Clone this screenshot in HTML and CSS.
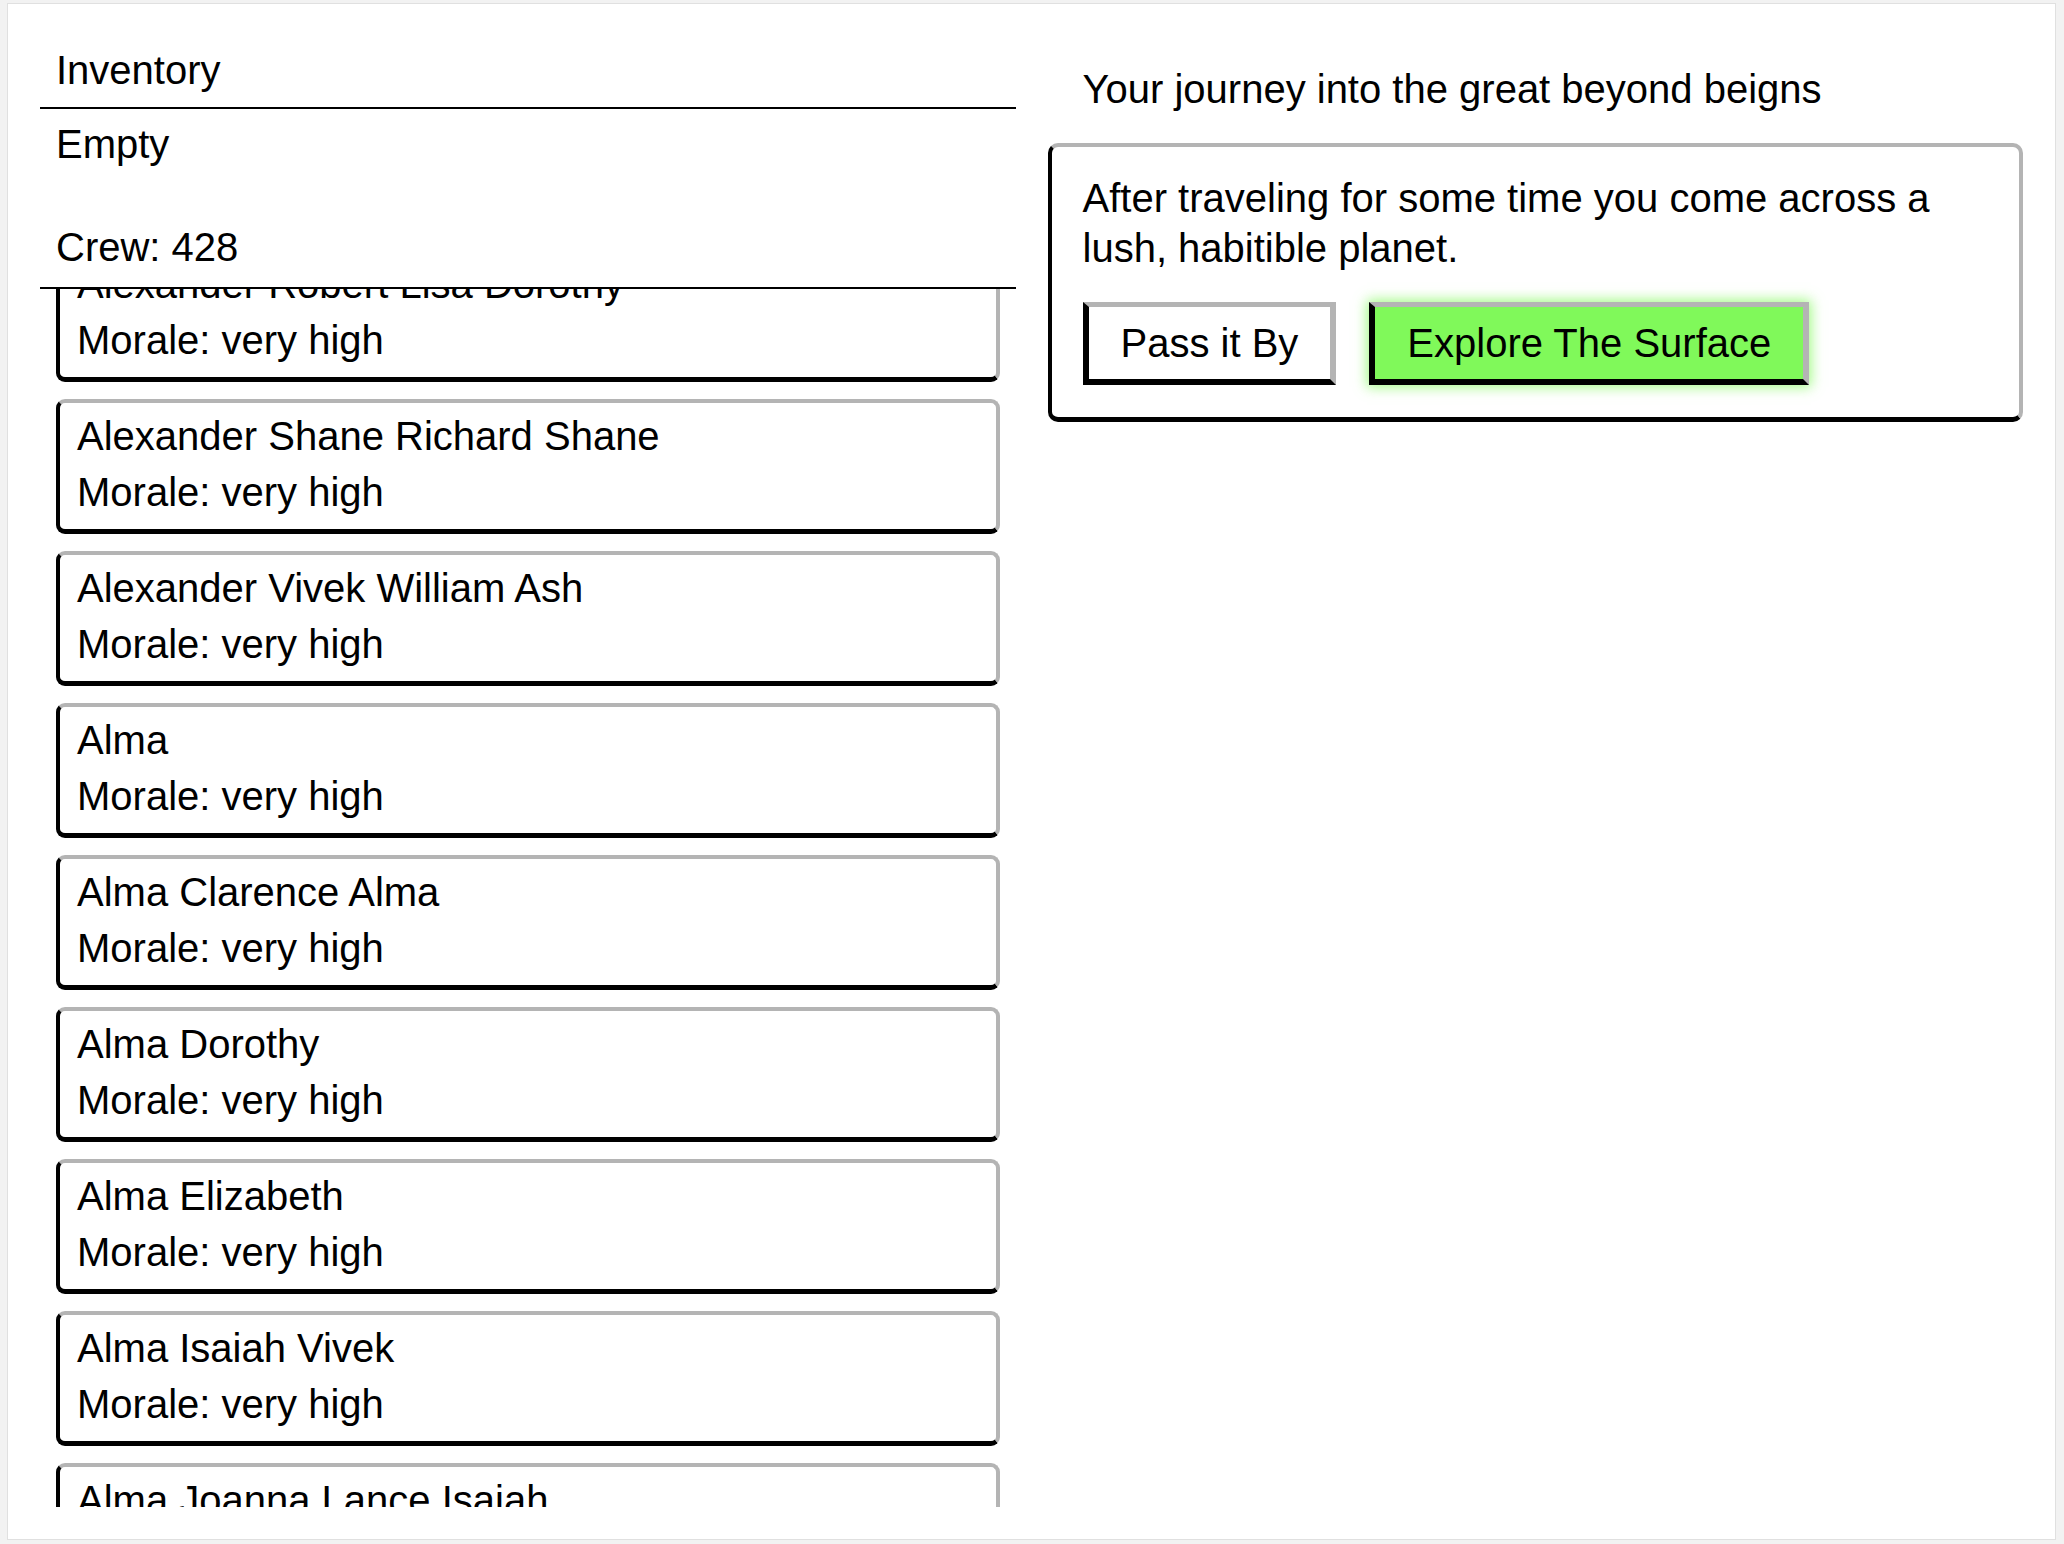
FILE: index.html
```html
<!DOCTYPE html>
<html lang="en">
<head>
<meta charset="utf-8">
<title>Voyage</title>
<link rel="stylesheet" href="styles.css">
</head>
<body>
<div class="frame">
  <main class="window">
    <section class="ship">
      <div class="inv-head">Inventory</div>
      <div class="inv-body">Empty</div>
      <div class="crew-head">Crew: 428</div>
      <div class="crew-list" id="crew">
        <div class="card"><div class="name">Alexander Robert Lisa Dorothy</div><div class="morale">Morale: very high</div></div>
        <div class="card"><div class="name">Alexander Shane Richard Shane</div><div class="morale">Morale: very high</div></div>
        <div class="card"><div class="name">Alexander Vivek William Ash</div><div class="morale">Morale: very high</div></div>
        <div class="card"><div class="name">Alma</div><div class="morale">Morale: very high</div></div>
        <div class="card"><div class="name">Alma Clarence Alma</div><div class="morale">Morale: very high</div></div>
        <div class="card"><div class="name">Alma Dorothy</div><div class="morale">Morale: very high</div></div>
        <div class="card"><div class="name">Alma Elizabeth</div><div class="morale">Morale: very high</div></div>
        <div class="card"><div class="name">Alma Isaiah Vivek</div><div class="morale">Morale: very high</div></div>
        <div class="card"><div class="name">Alma Joanna Lance Isaiah</div><div class="morale">Morale: very high</div></div>
        <div class="card"><div class="name">Alma Lisa</div><div class="morale">Morale: very high</div></div>
      </div>
    </section>
    <section class="story">
      <div class="journey">Your journey into the great beyond beigns</div>
      <div class="event">
        <p class="event-text">After traveling for some time you come across a lush, habitible planet.</p>
        <div class="choices">
          <button class="choice">Pass it By</button>
          <button class="choice choice-go">Explore The Surface</button>
        </div>
      </div>
    </section>
  </main>
</div>
<script src="script.js"></script>
</body>
</html>
```

FILE: styles.css
```css
* { box-sizing: border-box; }

html, body {
  margin: 0;
  padding: 0;
  background: #f2f2f2;
}

body {
  font-family: "Liberation Sans", Arial, Helvetica, sans-serif;
  font-size: 40px;
  line-height: 50px;
  color: #000;
}

.frame {
  height: 1544px;
  padding: 3px 8px 4px 7px;
}

.window {
  height: 100%;
  background: #fff;
  border: 1px solid #e0e0e0;
  padding: 32px;
  display: grid;
  grid-template-columns: 1fr 1fr;
  column-gap: 32px;
}

.ship {
  display: flex;
  flex-direction: column;
  min-height: 0;
}

.inv-head {
  padding: 9px 16px 12px;
  border-bottom: 2px solid #000;
}

.inv-body {
  padding: 10px 16px 0;
}

.crew-head {
  padding: 53px 16px 15px;
  border-bottom: 2px solid #000;
}

.crew-list {
  flex: 1 1 0;
  min-height: 0;
  overflow-y: auto;
  scrollbar-width: none;
  padding: 16px 16px 0;
}

.crew-list::-webkit-scrollbar { display: none; }

.card {
  border-style: solid;
  border-width: 4px 4px 5px 4px;
  border-color: #b4b4b4 #b4b4b4 #000 #000;
  border-radius: 9px;
  padding: 8px 16px 12px 17px;
  margin-bottom: 17px;
}

.morale {
  margin-top: 6px;
}

.story {
  display: flex;
  flex-direction: column;
  align-items: stretch;
}

.journey {
  padding: 28px 35px 0;
}

.event {
  margin-top: 29px;
  border-style: solid;
  border-width: 4px 4px 5px 4px;
  border-color: #b4b4b4 #b4b4b4 #000 #000;
  border-radius: 10px;
  padding: 26px 31px 32px;
}

.event-text {
  margin: 0;
}

.choices {
  display: flex;
  gap: 33px;
  margin-top: 29px;
}

.choice {
  font: inherit;
  line-height: 50px;
  color: #000;
  background: #fff;
  border-style: solid;
  border-width: 5px 6px 6px 6px;
  border-color: #b4b4b4 #b4b4b4 #000 #000;
  border-radius: 0;
  padding: 11px 32px;
  margin: 0;
}

.choice-go {
  background: #80f95a;
  box-shadow: 0 0 12px 2px rgba(128, 249, 90, 0.75);
}
```

FILE: script.js
```js
document.getElementById('crew').scrollTop = 58;
```
